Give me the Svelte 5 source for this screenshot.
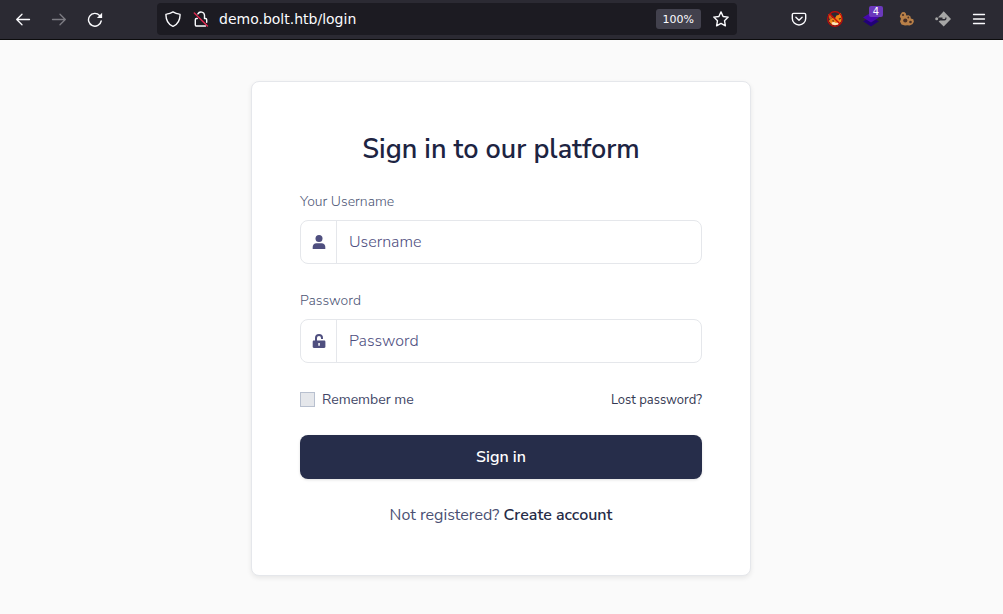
<script>
  let username = $state('');
  let password = $state('');
  let remember = $state(false);
</script>

<div class="window">
  <header class="toolbar">
    <nav class="tools" aria-label="Navigation">
      <button aria-label="Back">
        <svg width="16" height="16" viewBox="0 0 16 16" fill="none" stroke="#fbfbfe" stroke-width="1.3" stroke-linecap="round" stroke-linejoin="round"><path d="M14.5 8.500H1.7M7 3.200 1.7 8.500 7 13.800" /></svg>
      </button>
      <button aria-label="Forward" disabled>
        <svg width="16" height="16" viewBox="0 0 16 16" fill="none" stroke="#7d7c83" stroke-width="1.3" stroke-linecap="round" stroke-linejoin="round"><path d="M1.5 8.500h12.8M9 3.200 14.3 8.500 9 13.800" /></svg>
      </button>
      <button aria-label="Reload">
        <svg width="16" height="16" viewBox="0 0 16 16" fill="none" stroke="#fbfbfe" stroke-width="1.4" stroke-linecap="round"><path d="M14.2 10A6.4 6.4 0 1 1 12.6 4.400" /><path d="M15.100 1.800v5.200H9.900z" fill="#fbfbfe" stroke="none" /></svg>
      </button>
    </nav>

    <div class="urlbar">
      <svg width="16" height="16" viewBox="0 0 16 16" fill="none" stroke="#fbfbfe" stroke-width="1.4" stroke-linejoin="round"><path d="M8 .9c2 1.3 4.1 2 6.5 2.2.4 0 .6.3.6.6-.1 5-2 9.3-6.6 11.4a1.200 1.200 0 0 1-1 0C2.900 13 1 8.700.900 3.700c0-.3.200-.6.600-.6C3.900 2.900 6 2.200 8 .9z" /></svg>
      <svg width="16" height="16" viewBox="0 0 16 16" fill="none" stroke="#fbfbfe" stroke-width="1.4" stroke-linecap="round" stroke-linejoin="round"><path d="M4.900 2.900A3.500 3.500 0 0 1 11.500 4.300V7.500h1a1.200 1.200 0 0 1 1.200 1.200v2.600M4.300 7.500H3.500A1.200 1.200 0 0 0 2.300 8.700v5.100A1.200 1.200 0 0 0 3.500 15h9" /><path d="M1.300 2 14.500 15" stroke="#e22850" /></svg>
      <input class="address" type="text" aria-label="Address" value="demo.bolt.htb/login" />
      <button class="zoom">100%</button>
      <button class="star" aria-label="Bookmark this page">
        <svg width="16" height="16" viewBox="0 0 16 16" fill="none" stroke="#fbfbfe" stroke-width="1.4" stroke-linejoin="round"><path d="M8 .9 10.100 5.500 15.200 6.100 11.500 9.700 12.400 14.800 8 12.400 3.600 14.800 4.500 9.700.8 6.100 5.900 5.500z" /></svg>
      </button>
    </div>

    <div class="tools">
      <button aria-label="Save to Pocket">
        <svg width="16" height="16" viewBox="0 0 16 16" fill="none" stroke="#fbfbfe" stroke-width="1.4" stroke-linecap="round" stroke-linejoin="round"><path d="M2.600 2.400h10.800a1.300 1.300 0 0 1 1.300 1.300V7.500a6.700 6.500 0 0 1-13.400 0V3.700a1.300 1.300 0 0 1 1.300-1.300z" /><path d="M4.900 6.300 8 9.200l3.100-2.900" /></svg>
      </button>
      <button aria-label="Proxy disabled">
        <svg width="16" height="16" viewBox="0 0 16 16"><path d="M3 8.500 5 7l3 .3 1.500-2.800 2-.5 2.300-2.200L15 6l-.5 4-3 3.500L8 14.500l-3.500-1L1.800 10z" fill="#ef8717" /><path d="m1.200 3 2.300.8L5.500 7l-3 1.500z" fill="#c9651c" /><path d="M4.500 11.500 7 11l2 1 3.500-1-1.500 2.500-3 .8-2.700-.8z" fill="#ffe6c0" /><path d="M12 8.300 13.800 7.200M5.500 9.500l1.300.8" stroke="#5a2410" stroke-width="1.300" /><circle cx="8" cy="8" r="7.300" fill="none" stroke="#c80808" stroke-width="1.200" /><path d="m2.900 2.900 10.200 10.200" stroke="#c80808" stroke-width="1.400" /></svg>
      </button>
      <button aria-label="Wappalyzer, 4 found">
        <svg width="16" height="16" viewBox="0 0 16 16"><path d="M0 10.300 3.500 8.400 8 11l4.500-2.600L16 10.300 8 15.600z" fill="#210078" /><path d="M0 6.500 8 1.600l8 4.900-8 5z" fill="#4608ad" /></svg>
        <span class="badge">4</span>
      </button>
      <button aria-label="Cookie editor">
        <svg width="16" height="16" viewBox="0 0 16 16"><path d="M1.500 3.500 3 1.300 5.300 1l1.500 1.200.5 2.300 2.400-.3L11.500 5.500l.3 2 2.500.8.6 2.400-1.500 2.500-2.900 1.300-2-.3L6 14.600 2.500 13.400 1 10.500l1-2.800L.8 5.500z" fill="#b98048" /><circle cx="6.300" cy="9.500" r="2.100" fill="#4a3026" /><circle cx="4" cy="4" r="1.100" fill="#4a3026" /><circle cx="9.300" cy="6.500" r=".9" fill="#4a3026" /><circle cx="11.500" cy="11" r="1.300" fill="#4a3026" /></svg>
      </button>
      <button aria-label="Proxy switcher">
        <svg width="16" height="16" viewBox="0 0 16 16" fill="#a6a6a6"><path d="M8.700.3 16 7.900 8.700 15.400 3.600 10.500 5 9.500H9.500a2 2 0 0 0 2-2V6.500H10.300v.8a.8.8 0 0 1-.8.8H7.500V6.500H3z" /><circle cx="1.700" cy="7.700" r="1.500" /></svg>
      </button>
      <button aria-label="Open menu">
        <svg width="16" height="16" viewBox="0 0 16 16" stroke="#fbfbfe" stroke-width="1.300" stroke-linecap="round"><path d="M2.500 3.500h11M2.500 8h11M2.500 12.500h11" /></svg>
      </button>
    </div>
  </header>

  <main>
    <form class="card" onsubmit={(e) => e.preventDefault()}>
      <h1>Sign in to our platform</h1>

      <div class="field">
        <label for="username">Your Username</label>
        <div class="group">
          <span class="addon">
            <svg width="14" height="14" viewBox="0 0 14 14" fill="#4f4f7f"><circle cx="7" cy="3.500" r="3.500" /><path d="M.7 14V11.900c0-2.200 1.600-3.700 3.700-3.700h5.200c2.100 0 3.700 1.500 3.700 3.700V14z" /></svg>
          </span>
          <input id="username" type="text" placeholder="Username" bind:value={username} />
        </div>
      </div>

      <div class="field">
        <label for="password">Password</label>
        <div class="group">
          <span class="addon">
            <svg width="14" height="14" viewBox="0 0 14 14" fill="#4f4f7f"><path fill-rule="evenodd" d="M3 6.500V4a4 4 0 0 1 8 0v1H9V4a2 2 0 0 0-4 0v2.500h7.200c.7 0 1.200.5 1.200 1.200v5.100c0 .7-.5 1.200-1.200 1.200H1.900C1.200 14 .7 13.500.7 12.800V7.700c0-.7.5-1.200 1.200-1.200zM6.300 9v2.700h1.500V9z" /></svg>
          </span>
          <input id="password" type="password" placeholder="Password" bind:value={password} />
        </div>
      </div>

      <div class="options">
        <label class="remember"><input type="checkbox" bind:checked={remember} />Remember me</label>
        <a class="lost" href="#lost">Lost password?</a>
      </div>

      <button class="submit" type="submit">Sign in</button>

      <p class="register">Not registered? <a href="#register">Create account</a></p>
    </form>
  </main>
</div>

<style>
  :global(body) {
    margin: 0;
    background: #fafafa;
  }
  .window {
    min-height: 100vh;
    font-family: "Nunito Sans", Lato, sans-serif;
    color: #4a5073;
  }
  .window * {
    box-sizing: border-box;
  }
  button,
  input {
    font: inherit;
    border: 0;
    margin: 0;
    padding: 0;
    background: none;
    color: inherit;
  }
  svg {
    flex: none;
    display: block;
  }

  .toolbar {
    display: flex;
    align-items: center;
    gap: 44px;
    height: 40px;
    padding: 0 6px 1px 5px;
    background: #2b2a33;
    border-bottom: 1px solid #0c0c0d;
    font-family: "DejaVu Sans", sans-serif;
  }
  .tools {
    display: flex;
  }
  .tools button {
    position: relative;
    display: grid;
    place-items: center;
    width: 36px;
    height: 32px;
  }
  .urlbar {
    flex: 1;
    min-width: 0;
    display: flex;
    align-items: center;
    gap: 12px;
    height: 32px;
    padding: 0 8px;
    border-radius: 4px;
    background: #1c1b22;
    color: #fbfbfe;
  }
  .address {
    flex: 1;
    min-width: 0;
    margin-left: -2px;
    font-size: 14px;
  }
  .zoom {
    height: 20px;
    padding: 0 7px;
    border-radius: 3px;
    background: #42414d;
    font-size: 11px;
  }
  .badge {
    position: absolute;
    top: 3px;
    right: 6px;
    width: 14px;
    height: 11px;
    border-radius: 2px;
    background: #6b39bc;
    color: #fff;
    font-size: 10px;
    line-height: 11px;
    text-align: center;
  }

  main {
    display: flex;
    justify-content: center;
    padding: 41px 17px 38px 16px;
  }
  .card {
    width: 100%;
    max-width: 500px;
    padding: 48px;
    border: 1px solid #e5e7eb;
    border-radius: 8px;
    background: #fff;
    box-shadow: 0 2px 5px rgba(0, 0, 0, 0.08);
  }
  h1 {
    margin: 0 0 21px;
    color: #1d2442;
    font-size: 27px;
    font-weight: 600;
    line-height: 40px;
    text-align: center;
  }
  .field {
    margin-bottom: 26px;
  }
  .field label {
    display: block;
    margin-bottom: 8px;
    color: #4f5877;
    font-size: 14px;
    font-weight: 300;
    line-height: 21px;
  }
  .group {
    display: flex;
    height: 44px;
    border: 1px solid #e5e7eb;
    border-radius: 8px;
  }
  .addon {
    display: grid;
    place-items: center;
    width: 36px;
    border-right: 1px solid #e5e7eb;
  }
  .group input {
    flex: 1;
    min-width: 0;
    padding: 0 12px;
    font-size: 16px;
    font-weight: 300;
  }
  .group input::placeholder {
    color: #4f4f7f;
    opacity: 1;
  }
  .options {
    display: flex;
    align-items: last baseline;
    justify-content: space-between;
    margin-bottom: 24px;
    line-height: 21px;
  }
  .remember {
    display: flex;
    align-items: center;
    gap: 7px;
    font-size: 14px;
    color: #424767;
  }
  .remember input {
    appearance: none;
    width: 15px;
    height: 15px;
    border: 1px solid #b8c0cf;
    background: #e5e7eb;
  }
  .remember input:checked {
    background: #262b47;
  }
  .lost {
    color: #343852;
    font-size: 13px;
    text-decoration: none;
  }
  .submit {
    display: block;
    width: 100%;
    height: 44px;
    border-radius: 8px;
    background: #262d4a;
    box-shadow: 0 1px 3px rgba(0, 0, 0, 0.12);
    color: #fff;
    font-size: 16px;
    font-weight: 600;
  }
  .register {
    margin: 24px 0 0;
    font-size: 16px;
    line-height: 24px;
    text-align: center;
  }
  .register a {
    color: #262b47;
    font-weight: 600;
    text-decoration: none;
  }
</style>
